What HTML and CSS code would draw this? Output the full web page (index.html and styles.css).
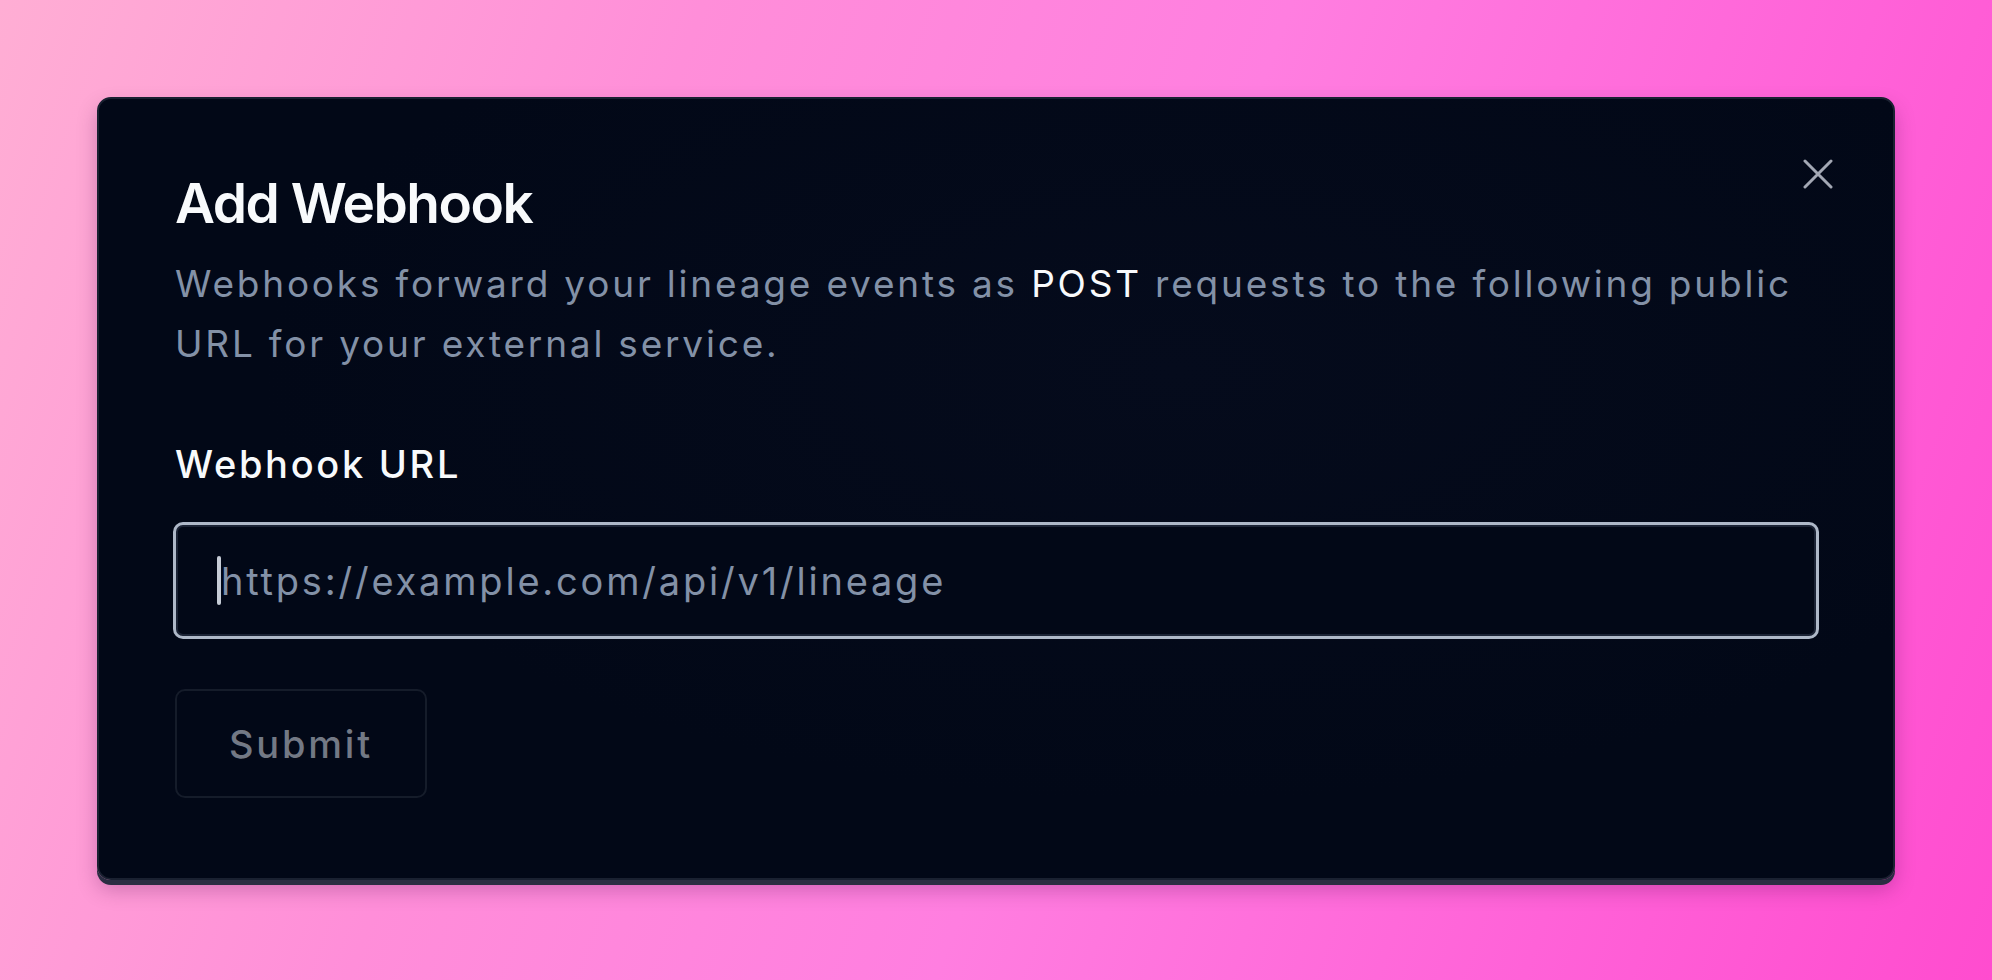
FILE: index.html
```html
<!DOCTYPE html>
<html lang="en">
<head>
  <meta charset="UTF-8">
  <meta name="viewport" content="width=device-width, initial-scale=1.0">
  <title>Add Webhook</title>
  <link rel="stylesheet" href="styles.css">
</head>
<body>
  <div class="dialog" role="dialog" aria-labelledby="dialogTitle">
    <button class="close-btn" aria-label="Close">
      <svg width="30" height="30" viewBox="0 0 30 30" fill="none" stroke="currentColor" stroke-width="3" stroke-linecap="round">
        <path d="M2 2 L28 28 M28 2 L2 28"/>
      </svg>
    </button>
    <h2 id="dialogTitle" class="dialog-title">Add Webhook</h2>
    <p class="dialog-desc">Webhooks forward your lineage events as <span class="hl">POST</span> requests to the following public URL for your external service.</p>
    <form class="webhook-form">
      <label for="webhookUrl">Webhook URL</label>
      <div class="input-wrap">
        <span class="caret"></span>
        <input type="text" id="webhookUrl" placeholder="https://example.com/api/v1/lineage">
      </div>
      <button class="submit-btn" type="submit" disabled>Submit</button>
    </form>
  </div>
</body>
</html>
```

FILE: styles.css
```css
html, body {
  margin: 0;
  height: 100%;
}
body {
  font-family: Inter, 'Liberation Sans', sans-serif;
  background: linear-gradient(110deg, #ffaed4 0%, #ff8ed9 30%, #ff7ee0 55%, #ff62d8 80%, #ff4ccf 100%);
  padding: 97px;
  box-sizing: border-box;
}
.dialog {
  position: relative;
  background: radial-gradient(ellipse at 60% 35%, #050b1c 0%, #020817 60%);
  border: 2px solid #1a2131;
  border-radius: 14px;
  box-shadow: 0 5px 0 #2a2d42, 0 10px 20px rgba(60, 0, 60, 0.25);
  padding: 71px 74px 80px 76px;
  color: #f8fafc;
}
.close-btn {
  position: absolute;
  top: 60px;
  right: 60px;
  background: none;
  border: none;
  padding: 0;
  color: #a3a8b4;
  cursor: pointer;
  line-height: 0;
}
.dialog-title {
  margin: 0;
  font-size: 55px;
  line-height: 66px;
  font-weight: 600;
  letter-spacing: -1.5px;
}
.dialog-desc {
  margin: 18px 0 0;
  font-size: 37px;
  line-height: 60px;
  letter-spacing: 2.8px;
  color: #8391a7;
}
.dialog-desc .hl {
  color: #f8fafc;
}
.webhook-form {
  display: flex;
  flex-direction: column;
  align-items: flex-start;
  margin-top: 62px;
}
.webhook-form label {
  font-size: 38px;
  line-height: 56px;
  font-weight: 500;
  letter-spacing: 2.7px;
}
.input-wrap {
  position: relative;
  margin-top: 30px;
  align-self: stretch;
  margin-left: -2px;
}
.input-wrap input {
  display: block;
  width: 100%;
  box-sizing: border-box;
  height: 117px;
  padding: 0 45px;
  background: #020817;
  border: 3px solid #aeb8c8;
  border-radius: 10px;
  box-shadow: inset 0 0 0 2px #1b2335;
  font-family: inherit;
  font-size: 38px;
  letter-spacing: 2.8px;
  color: #f8fafc;
  outline: none;
}
.input-wrap input::placeholder {
  color: #8391a7;
}
.caret {
  position: absolute;
  left: 44px;
  top: 34px;
  width: 4px;
  height: 49px;
  border-radius: 2px;
  background: #c6ccd6;
}
.submit-btn {
  margin-top: 50px;
  width: 252px;
  height: 109px;
  background: transparent;
  border: 2px solid #151c2a;
  border-radius: 10px;
  font-family: inherit;
  font-size: 38px;
  font-weight: 500;
  letter-spacing: 2.8px;
  color: #737985;
}
```
